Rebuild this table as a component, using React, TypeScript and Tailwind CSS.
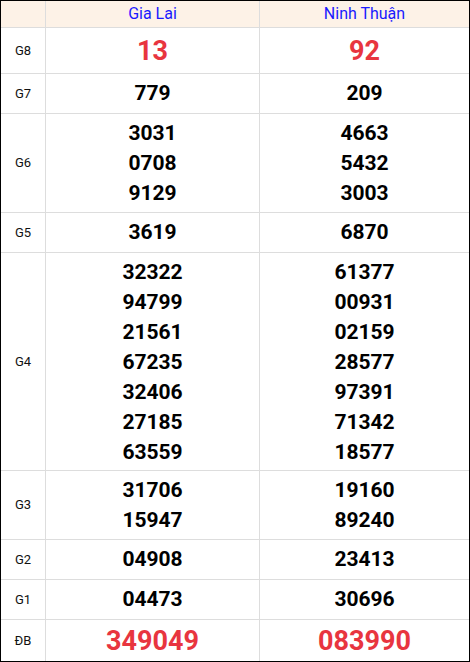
const rows: { label: string; h: string; big?: boolean; a: string[]; b: string[] }[] = [
  { label: "G8", h: "h-[46px]", big: true, a: ["13"], b: ["92"] },
  { label: "G7", h: "h-[40px]", a: ["779"], b: ["209"] },
  { label: "G6", h: "h-[99px]", a: ["3031", "0708", "9129"], b: ["4663", "5432", "3003"] },
  { label: "G5", h: "h-[40px]", a: ["3619"], b: ["6870"] },
  {
    label: "G4",
    h: "h-[218px]",
    a: ["32322", "94799", "21561", "67235", "32406", "27185", "63559"],
    b: ["61377", "00931", "02159", "28577", "97391", "71342", "18577"],
  },
  { label: "G3", h: "h-[69px]", a: ["31706", "15947"], b: ["19160", "89240"] },
  { label: "G2", h: "h-[40px]", a: ["04908"], b: ["23413"] },
  { label: "G1", h: "h-[40px]", a: ["04473"], b: ["30696"] },
  { label: "ĐB", h: "h-[41px]", big: true, a: ["349049"], b: ["083990"] },
]

function Cell({ nums, big, last }: { nums: string[]; big?: boolean; last?: boolean }) {
  return (
    <div
      className={`flex flex-col items-center justify-center ${nums.length === 1 && !big ? "pb-[2px]" : ""} ${last ? "" : "border-r border-[#dddddd]"}`}
    >
      {nums.map((n) => (
        <span
          key={n}
          className={
            big
              ? "text-[27px] leading-[32px] font-bold text-[#e8353f]"
              : "text-[21px] leading-[30px] font-bold text-black"
          }
        >
          {n}
        </span>
      ))}
    </div>
  )
}

export default function App() {
  return (
    <div
      className="w-[470px] h-[662px] border border-black bg-white"
      style={{ fontFamily: "Roboto, 'Liberation Sans', sans-serif" }}
    >
      {/* Header */}
      <div className="grid grid-cols-[45px_214px_1fr] h-[27px] bg-[#fdf2e7] border-b border-[#dddddd]">
        <div className="border-r border-[#dddddd]" />
        <div className="flex items-center justify-center border-r border-[#dddddd] text-[16px] text-[#1a1aff]">
          Gia Lai
        </div>
        <div className="flex items-center justify-center text-[16px] text-[#1a1aff]">Ninh Thuận</div>
      </div>

      {rows.map((r, i) => (
        <div
          key={r.label}
          className={`grid grid-cols-[45px_214px_1fr] ${r.h} ${i < rows.length - 1 ? "border-b border-[#dddddd]" : ""}`}
        >
          <div className="flex items-center justify-center border-r border-[#dddddd] text-[13px] text-[#111]">
            {r.label}
          </div>
          <Cell nums={r.a} big={r.big} />
          <Cell nums={r.b} big={r.big} last />
        </div>
      ))}
    </div>
  )
}
